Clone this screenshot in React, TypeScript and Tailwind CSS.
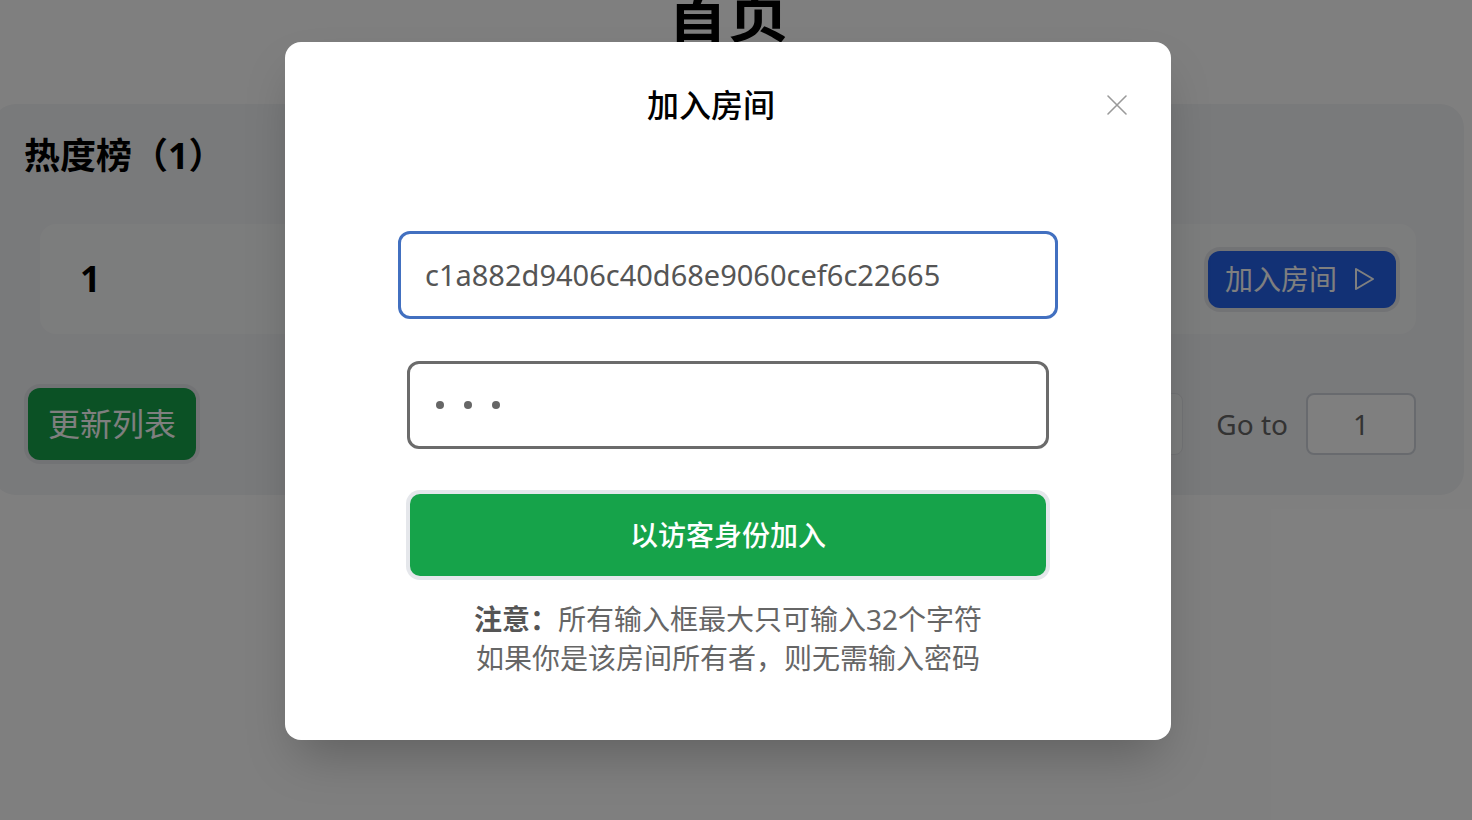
import React from 'react'

function CloseIcon() {
  return (
    <svg width="22" height="22" viewBox="0 0 22 22" fill="none">
      <path d="M2 2L20 20M20 2L2 20" stroke="#9a9a9a" strokeWidth="1.6" strokeLinecap="round" />
    </svg>
  )
}

function PlayIcon() {
  return (
    <svg width="21" height="24" viewBox="0 0 21 24" fill="none">
      <path d="M2 2L19 12L2 22Z" stroke="white" strokeWidth="2" strokeLinejoin="round" />
    </svg>
  )
}

function JoinRoomModal() {
  return (
    <div className="flex h-[698px] w-[886px] flex-col items-center rounded-2xl bg-white px-[37px] pt-[43px] shadow-2xl">
      {/* Header */}
      <div className="flex h-[40px] w-full items-center">
        <h3 className="flex-1 text-center text-[32px] font-medium leading-[40px] text-black">加入房间</h3>
        <button className="flex h-[34px] w-[34px] items-center justify-center">
          <CloseIcon />
        </button>
      </div>

      {/* Room id */}
      <div className="mt-[106px] flex h-[88px] w-[660px] items-center rounded-xl border-[3px] border-[#4270c0] pl-6 text-[29px] text-[#555]">
        c1a882d9406c40d68e9060cef6c22665
      </div>

      {/* Password */}
      <div className="mt-[42px] flex h-[88px] w-[642px] items-center gap-5 rounded-xl border-[3px] border-[#6b6b6b] pl-[26px]">
        <span className="h-2 w-2 rounded-full bg-[#666]" />
        <span className="h-2 w-2 rounded-full bg-[#666]" />
        <span className="h-2 w-2 rounded-full bg-[#666]" />
      </div>

      <button className="mt-[45px] h-[82px] w-[636px] rounded-[10px] bg-[#16a34a] text-[28px] font-medium text-white ring-4 ring-gray-200">
        以访客身份加入
      </button>

      <div className="mt-6 text-center text-[28px] leading-[39px] text-[#666]">
        <p>
          <span className="font-bold text-[#555]">注意：</span>所有输入框最大只可输入32个字符
        </p>
        <p>如果你是该房间所有者，则无需输入密码</p>
      </div>
    </div>
  )
}

export default function App() {
  return (
    <div className="relative h-[820px] w-[1472px] overflow-hidden bg-white font-['Noto_Sans','Noto_Sans_CJK_SC',sans-serif] text-black">
      <div className="relative -ml-2 flex h-full w-[1480px] flex-col">
        <div className="w-[1472px]">
          <h1 className="-mt-[16px] text-center text-[60px] font-bold leading-none">首页</h1>

          {/* Hot list */}
          <div className="mt-[60px] rounded-3xl bg-gray-100 px-8 pb-[35px] pt-8">
            <h2 className="text-[36px] font-bold leading-[40px]">热度榜（1）</h2>

            <div className="mx-4 mt-12 flex h-[110px] items-center justify-between rounded-2xl bg-gray-50 pl-10 pr-5">
              <span className="text-[36px] font-bold">1</span>
              <button className="flex h-[57px] w-[188px] items-center gap-[17px] rounded-xl bg-[#2563eb] pl-[17px] text-[28px] text-white ring-4 ring-gray-200">
                <span>加入房间</span>
                <PlayIcon />
              </button>
            </div>

            <div className="ml-1 mr-4 mt-[54px] flex items-center justify-between">
              <button className="h-[72px] w-[168px] rounded-xl bg-[#16a34a] text-[32px] text-white ring-4 ring-gray-200">
                更新列表
              </button>
              <div className="flex items-center">
                <div className="h-[62px] w-[240px] rounded-lg border border-gray-200 bg-gray-50" />
                <span className="ml-[33px] text-[28px] text-[#666]">Go to</span>
                <div className="ml-[18px] flex h-[62px] w-[110px] items-center justify-center rounded-lg border-2 border-gray-300 bg-white text-[28px] text-[#666]">
                  1
                </div>
              </div>
            </div>
          </div>
        </div>

        {/* Modal overlay */}
        <div className="absolute inset-0 bg-black/50 pt-[42px]">
          <div className="flex w-[1472px] justify-center">
            <JoinRoomModal />
          </div>
        </div>
      </div>
    </div>
  )
}
